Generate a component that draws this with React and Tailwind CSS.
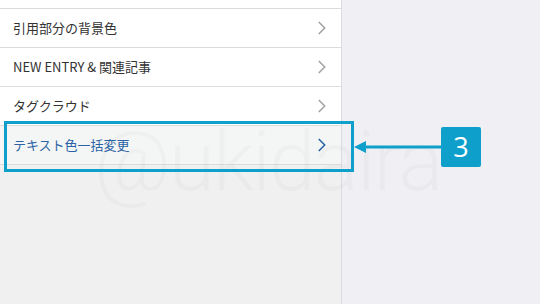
import { ChevronRight } from "lucide-react";

const items = [
  { label: "引用部分の背景色" },
  { label: "NEW ENTRY & 関連記事" },
  { label: "タグクラウド" },
  { label: "テキスト色一括変更", active: true },
];

export default function App() {
  return (
    <div
      className="relative w-[540px] h-[304px] flex overflow-hidden bg-[#f0eff4]"
      style={{ fontFamily: '"Noto Sans CJK JP", "Noto Sans", sans-serif' }}
    >
      {/* Left menu panel */}
      <div className="w-[342px] h-full bg-[#f0f0f0] border-r border-[#dcdcdc]">
        <div className="h-[9px] bg-white border-b border-[#dcdcdc]" />
        {items.map((item) => (
          <div
            key={item.label}
            className={`h-[39px] flex items-center justify-between pl-[13px] pr-[8px] border-b border-[#dcdcdc] ${
              item.active ? "bg-[#f4f6f5]" : "bg-white"
            }`}
          >
            <span
              className={`text-[13px] ${
                item.active ? "text-[#2b63a6]" : "text-[#333333]"
              }`}
            >
              {item.label}
            </span>
            <ChevronRight
              size={22}
              strokeWidth={1.8}
              className={item.active ? "text-[#2b63a6]" : "text-[#a3a3a3]"}
            />
          </div>
        ))}
      </div>

      {/* Watermark */}
      <div
        className="absolute left-[94px] top-[120px] text-[84px] leading-none font-light tracking-[-2px] text-black/[0.022] select-none pointer-events-none"
        style={{ fontFamily: "Roboto, sans-serif" }}
      >
        @ukidaira
      </div>

      {/* Highlight box */}
      <div className="absolute left-[4px] top-[121px] w-[350px] h-[51px] border-[3px] border-[#0e9fcb]" />

      {/* Arrow + number badge */}
      <div className="absolute left-[354px] top-[127px] flex items-center">
        <svg width="87" height="14" viewBox="0 0 87 14">
          <polygon points="0,7 12,1 12,13" fill="#0e9fcb" />
          <rect x="10" y="5.5" width="77" height="3" fill="#0e9fcb" />
        </svg>
        <div
          className="w-[40px] h-[40px] rounded-[2px] bg-[#0e9fcb] text-white text-[27px] flex items-center justify-center"
          style={{ fontFamily: '"Open Sans", sans-serif' }}
        >
          3
        </div>
      </div>
    </div>
  );
}
